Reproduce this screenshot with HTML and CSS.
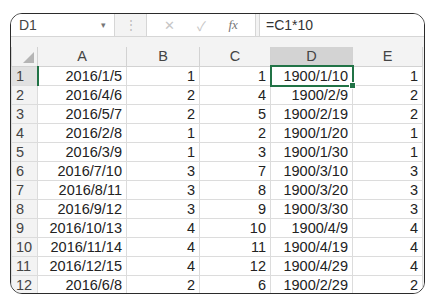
FILE: index.html
```html
<!DOCTYPE html>
<html lang="zh-CN">
<head>
  <meta charset="UTF-8">
  <title>Sheet</title>
  <link rel="stylesheet" href="styles.css">
</head>
<body>
  <div class="frame">
    <div class="formulaBar">
      <div class="nameBox">D1<span class="arrow">&#9662;</span></div>
      <div class="grip">&#8942;</div>
      <div class="buttons">
        <span class="btn">&#10005;</span>
        <span class="btn">&#10003;</span>
        <span class="btn fx">fx</span>
      </div>
      <div class="formula">=C1*10</div>
    </div>

    <table class="sheet">
      <colgroup>
        <col class="colHead"><col class="colA"><col class="colB"><col class="colC"><col class="colD"><col class="colE"><col>
      </colgroup>
      <thead>
        <tr>
          <th class="corner"><span class="tri"></span></th>
          <th>A</th><th>B</th><th>C</th><th class="selCol">D</th><th>E</th><th class="rest"></th>
        </tr>
      </thead>
      <tbody id="rows"></tbody>
    </table>
  </div>

  <script>
  const data = [
    ['2016/1/5', 1, 1, '1900/1/10', 1],
    ['2016/4/6', 2, 4, '1900/2/9', 2],
    ['2016/5/7', 2, 5, '1900/2/19', 2],
    ['2016/2/8', 1, 2, '1900/1/20', 1],
    ['2016/3/9', 1, 3, '1900/1/30', 1],
    ['2016/7/10', 3, 7, '1900/3/10', 3],
    ['2016/8/11', 3, 8, '1900/3/20', 3],
    ['2016/9/12', 3, 9, '1900/3/30', 3],
    ['2016/10/13', 4, 10, '1900/4/9', 4],
    ['2016/11/14', 4, 11, '1900/4/19', 4],
    ['2016/12/15', 4, 12, '1900/4/29', 4],
    ['2016/6/8', 2, 6, '1900/2/29', 2]
  ];

  const rows = document.getElementById('rows');
  data.forEach(function (row, i) {
    const tr = document.createElement('tr');
    let html = '<th class="rowHead' + (i === 0 ? ' selRow' : '') + '">' + (i + 1) + '</th>';
    row.forEach(function (v, j) {
      const sel = (i === 0 && j === 3) ? ' class="active"' : '';
      html += '<td' + sel + '>' + v + '</td>';
    });
    html += '<td class="rest"></td>';
    tr.innerHTML = html;
    rows.appendChild(tr);
  });
  </script>
</body>
</html>
```

FILE: styles.css
```css
body {
  margin: 0;
  background-color: #fff;
  font-family: "Liberation Sans", Arial, sans-serif;
}

.frame {
  margin: 13px 0 0 10px;
  width: 415px;
  height: 281px;
  border: 1.5px solid #2b2b2b;
  border-radius: 12px;
  overflow: hidden;
  background-color: #f3f3f3;
  box-sizing: border-box;
}

.formulaBar {
  display: flex;
  height: 22px;
  border-bottom: 1px solid #d6d6d6;
  font-size: 14px;
  color: #444;
}

.nameBox {
  width: 104px;
  background-color: #fff;
  border-right: 1px solid #d6d6d6;
  display: flex;
  align-items: center;
  justify-content: space-between;
  padding: 0 8px 0 8px;
  box-sizing: border-box;
}

.arrow {
  font-size: 9px;
  color: #777;
}

.grip {
  width: 31px;
  display: flex;
  align-items: center;
  justify-content: center;
  color: #bbb;
  font-size: 12px;
}

.buttons {
  width: 110px;
  background-color: #fff;
  border-left: 1px solid #d6d6d6;
  border-right: 1px solid #d6d6d6;
  display: flex;
  align-items: center;
  justify-content: space-around;
  padding: 0 6px;
  box-sizing: border-box;
}

.btn {
  color: #c6c6c6;
  font-size: 13px;
}

.fx {
  color: #777;
  font-family: "Liberation Serif", serif;
  font-style: italic;
  font-size: 13px;
}

.formula {
  flex: 1;
  background-color: #fff;
  margin-left: 3px;
  border-left: 1px solid #d6d6d6;
  display: flex;
  align-items: center;
  padding-left: 6px;
  color: #333;
}

.sheet {
  margin-top: 10px;
  border-collapse: collapse;
  table-layout: fixed;
  width: 100%;
  font-size: 14.5px;
  color: #222;
}

.colHead { width: 26px; }
.colA { width: 89px; }
.colB { width: 73px; }
.colC { width: 71px; }
.colD { width: 82px; }
.colE { width: 70px; }

.sheet th,
.sheet td {
  height: 18px;
  padding: 0 4px;
  border: 1px solid #dcdcdc;
  white-space: nowrap;
  overflow: visible;
}

.sheet thead th {
  font-weight: normal;
  background-color: #f3f3f3;
  color: #444;
  border-top: none;
  border-color: #d2d2d2;
  text-align: center;
}

.sheet td {
  background-color: #fff;
  text-align: right;
}

.sheet .rest {
  background-color: #f3f3f3;
  border: none;
  padding: 0;
}

.sheet thead .rest {
  border: none;
}

.corner {
  position: relative;
  border-left: none;
}

.tri {
  position: absolute;
  right: 3px;
  bottom: 3px;
  width: 0;
  height: 0;
  border-left: 11px solid transparent;
  border-bottom: 11px solid #b5b5b5;
}

.sheet .selCol {
  background-color: #d3d3d3;
  border-bottom: 2px solid #217346;
}

.rowHead {
  font-weight: normal;
  background-color: #f3f3f3;
  color: #444;
  text-align: left;
  border-left: none;
  border-color: #d2d2d2;
}

.sheet .selRow {
  background-color: #e1e1e1;
  border-right: 2px solid #217346;
}

.sheet td.active {
  position: relative;
  outline: 2px solid #217346;
  outline-offset: -1px;
}

.active::after {
  content: "";
  position: absolute;
  right: -4px;
  bottom: -4px;
  width: 5px;
  height: 5px;
  background-color: #217346;
  border: 1px solid #fff;
}
```
